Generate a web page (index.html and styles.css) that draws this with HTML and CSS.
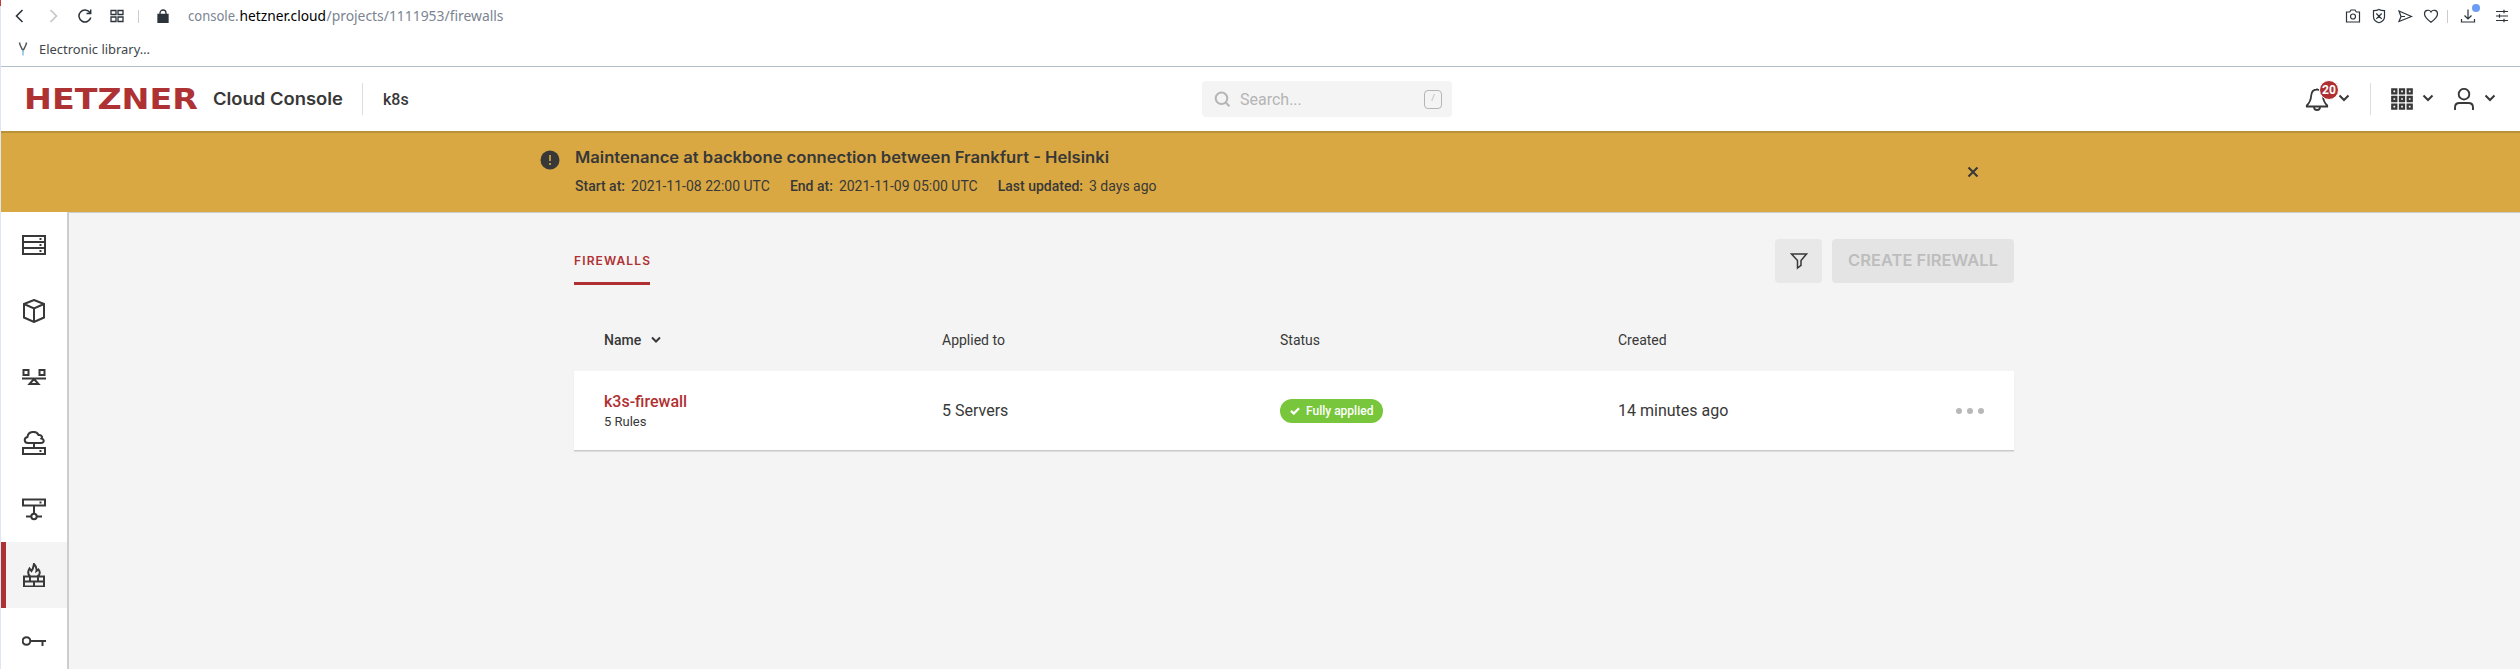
FILE: index.html
```html
<!DOCTYPE html>
<html lang="en">
<head>
<meta charset="utf-8">
<title>Firewalls - k8s</title>
<link rel="stylesheet" href="styles.css">
</head>
<body>
<div class="edge"><i class="edge-mark"></i></div>
<div class="window">
  <div class="toolbar">
    <svg class="back" width="9" height="14" viewBox="0 0 9 14"><path d="M7.500 1L1.500 7L7.500 13"/></svg>
    <svg class="forward" width="9" height="14" viewBox="0 0 9 14"><path d="M1.500 1L7.500 7L1.500 13"/></svg>
    <svg class="reload" width="14" height="14" viewBox="0 0 14 14"><path d="M12 3.700A6 6 0 1 0 12.800 8.500M12.700 .5V4.500H8.500"/></svg>
    <svg class="tabs" width="14" height="14" viewBox="0 0 14 14"><path d="M1 1.500h5v4H1zM8 1.500h5v4H8zM1 8h5v4.500H1zM8 8h5v4.500H8z"/></svg>
    <i class="sep"></i>
    <svg class="lock" width="12" height="14" viewBox="0 0 12 14"><path class="ink" d="M1 5.500h10v8H1z"/><path d="M3 6V4a3 3 0 0 1 6 0v2"/></svg>
    <div class="url">
      <svg class="fit" width="316" height="22"><text class="url-text" y="16"><tspan x="0" textLength="50.500" lengthAdjust="spacingAndGlyphs">console.</tspan><tspan class="domain" x="51.500" textLength="86.500" lengthAdjust="spacingAndGlyphs">hetzner.cloud</tspan><tspan x="138.500" textLength="177" lengthAdjust="spacingAndGlyphs">/projects/1111953/firewalls</tspan></text></svg>
    </div>
    <div class="tools">
      <svg width="16" height="16" viewBox="0 0 16 16"><path d="M1.500 4h3.200l1.300-2h4l1.300 2h3.200v10h-13z"/><circle cx="8" cy="8.500" r="2.500"/></svg>
      <svg width="16" height="16" viewBox="0 0 16 16"><path d="M8 1.500c2 1.200 4 1.200 5.500 1.200v6c0 3-2.500 5-5.500 6c-3-1-5.500-3-5.500-6v-6C4 2.700 6 2.700 8 1.500zM5.300 5.500l5.400 5.400M10.700 5.500l-5.400 5.400"/></svg>
      <svg width="16" height="16" viewBox="0 0 16 16"><path d="M2 3l12.500 5.500L2 13.500l2-5zM4 8.500h4"/></svg>
      <svg width="16" height="16" viewBox="0 0 16 16"><path d="M8 14.300C5 12 1.500 9 1.500 6A3.500 3.500 0 0 1 8 4A3.500 3.500 0 0 1 14.500 6C14.500 9 11 12 8 14.300z"/></svg>
      <i class="sep"></i>
      <span class="download"><svg width="16" height="16" viewBox="0 0 16 16"><path d="M8 1.500v9M4.500 7.500L8 11l3.500-3.500M1.500 11v3h13v-3"/></svg><i class="dot"></i></span>
      <svg width="14" height="14" viewBox="0 0 14 14"><path d="M1 2.500h12M1 7h12M1 11.500h12M9 .8v3.400M4.500 5.300v3.400M9 9.800v3.400"/></svg>
    </div>
  </div>
  <div class="bookmarks">
    <svg width="10" height="14" viewBox="0 0 10 14"><path class="fork" d="M1.500 .5C1.500 3 3 5 5 8.500C7 5 8.500 3 8.500 .5"/><path class="stem" d="M5 8v5.500"/></svg>
    <svg class="fit" width="112" height="18"><text class="bookmark-text" y="14" textLength="111" lengthAdjust="spacingAndGlyphs">Electronic library…</text></svg>
  </div>
  <header class="header">
    <svg class="fit logo" width="172" height="24"><text y="22" x="-2" textLength="174" lengthAdjust="spacingAndGlyphs">HETZNER</text></svg>
    <svg class="fit product" width="130" height="24"><text y="18" textLength="130" lengthAdjust="spacingAndGlyphs">Cloud Console</text></svg>
    <i class="rule"></i>
    <span class="project">k8s</span>
    <div class="search">
      <svg width="17" height="17" viewBox="0 0 17 17"><circle cx="7.500" cy="7.300" r="5.800"/><path d="M11.700 11.500L15.500 15.300"/></svg>
      <span>Search...</span>
      <kbd>/</kbd>
    </div>
    <div class="account">
      <span class="bell">
        <svg width="24" height="24" viewBox="0 0 24 24"><path d="M12 1.500v1M12 2.500C8 2.500 6.500 5 6.200 8.500C5.900 13 5 15.500 1.800 18.500V19.500H22.200V18.500C19 15.500 18.100 13 17.800 8.500C17.500 5 16 2.500 12 2.500zM9 20a3 3 0 0 0 6 0"/></svg>
        <b>20</b>
      </span>
      <svg class="chev" width="12" height="8" viewBox="0 0 12 8"><path d="M1.500 1.500L6 6L10.500 1.500"/></svg>
      <i class="rule"></i>
      <svg class="apps" width="22" height="22" viewBox="0 0 22 22"><path d="M1.300 1.300h4v4h-4zM9 1.300h4v4H9zM16.700 1.300h4v4h-4zM1.300 9h4v4h-4zM9 9h4v4H9zM16.700 9h4v4h-4zM1.300 16.700h4v4h-4zM9 16.700h4v4H9zM16.700 16.700h4v4h-4z"/></svg>
      <svg class="chev chev-apps" width="12" height="8" viewBox="0 0 12 8"><path d="M1.500 1.500L6 6L10.500 1.500"/></svg>
      <svg class="user" width="20" height="22" viewBox="0 0 20 22"><circle cx="10" cy="6.200" r="5.300"/><path d="M1 22v-2.500C1 16.500 3 15 5.500 15h9c2.500 0 4.500 1.500 4.500 4.500V22"/></svg>
      <svg class="chev chev-user" width="12" height="8" viewBox="0 0 12 8"><path d="M1.500 1.500L6 6L10.500 1.500"/></svg>
    </div>
  </header>
  <section class="banner">
    <svg class="alert" width="20" height="20" viewBox="0 0 20 20"><circle cx="10" cy="10" r="9.500"/><path d="M10 5v6M10 13v2"/></svg>
    <div class="notice">
      <svg class="fit notice-title" width="536" height="22"><text y="16" textLength="534" lengthAdjust="spacingAndGlyphs">Maintenance at backbone connection between Frankfurt - Helsinki</text></svg>
      <div class="facts">
        <span><b>Start at:</b>2021-11-08 22:00 UTC</span>
        <span><b>End at:</b>2021-11-09 05:00 UTC</span>
        <span><b>Last updated:</b>3 days ago</span>
      </div>
    </div>
    <svg class="close" width="12" height="12" viewBox="0 0 12 12"><path d="M1.500 1.500l9 9M10.500 1.500l-9 9"/></svg>
  </section>
  <div class="body">
    <nav class="sidebar">
      <a><svg width="24" height="24" viewBox="0 0 24 24"><path d="M1 3h22v18H1zM1 9h22M1 15h22M17.500 6h2M17.500 12h2M17.500 18h2"/></svg></a>
      <a><svg width="24" height="24" viewBox="0 0 24 24"><path d="M12 1L22 5v13.500L12 23L2 18.500V5zM2 5l10 4.500L22 5M12 9.500V23"/></svg></a>
      <a><svg width="24" height="24" viewBox="0 0 24 24"><path d="M1.500 5h5v5h-5zM17.500 5h5v5h-5zM0 13.500h24M12 14l-4.500 5h9z"/></svg></a>
      <a><svg width="24" height="24" viewBox="0 0 24 24"><path d="M6 12C2 12 1.500 7 5.500 6C6 0 14.500 -.5 16.500 4C20 3.500 20.500 6.500 19.500 7.500C23 8.500 22 12 19 12zM12 12v4M1 17h22v6H1zM17.500 20h2"/></svg></a>
      <a><svg width="24" height="24" viewBox="0 0 24 24"><path d="M1 2.500h22v6H1zM17.500 5.500h2M12 8.500v8M4 19.500h5M15 19.500h5"/><circle cx="12" cy="19.500" r="2.700"/></svg></a>
      <a class="active"><svg width="24" height="24" viewBox="0 0 24 24"><path d="M2 13.500h20v10H2zM2 18.500h20M8 13.500v5M16 13.500v5M12 18.500v5M8 13C5.500 11 6 8 7.500 5.500L9.500 8C11 6 11.500 4 12 1C14 3 15 5 14.500 8L16.500 6.500C18.500 9 18 12 15.500 13"/></svg></a>
      <a><svg width="24" height="24" viewBox="0 0 24 24"><circle cx="4.500" cy="12" r="3.800"/><path d="M8.500 12H24M20.500 12v5"/></svg></a>
    </nav>
    <main class="main">
      <div class="topline">
        <div class="tab"><svg class="fit" width="76" height="18"><text y="14" textLength="76" lengthAdjust="spacing">FIREWALLS</text></svg></div>
        <div class="buttons">
          <button class="filter"><svg width="18" height="18" viewBox="0 0 18 18"><path d="M1.500 2h15L11 8.500v4.800L7.500 16V8.500z"/></svg></button>
          <button class="create"><svg class="fit" width="150" height="20"><text y="15" textLength="150" lengthAdjust="spacingAndGlyphs">CREATE FIREWALL</text></svg></button>
        </div>
      </div>
      <div class="row head">
        <span class="sorted">Name<svg class="sort" width="12" height="8" viewBox="0 0 12 8"><path d="M2 1.500L6 5.500L10 1.500"/></svg></span>
        <span>Applied to</span><span>Status</span><span>Created</span>
      </div>
      <div class="row item">
        <div class="name"><a>k3s-firewall</a><small>5 Rules</small></div>
        <span>5 Servers</span>
        <div><span class="pill"><svg width="10" height="8" viewBox="0 0 10 8"><path d="M1 3.800L3.800 6.500L9 1.200"/></svg>Fully applied</span></div>
        <span>14 minutes ago</span>
        <svg class="more" width="30" height="6" viewBox="0 0 30 6"><circle cx="4" cy="3" r="3"/><circle cx="15" cy="3" r="3"/><circle cx="26" cy="3" r="3"/></svg>
      </div>
    </main>
  </div>
</div>
</body>
</html>
```
FILE: styles.css
```css
* { box-sizing: border-box; }
body {
  margin: 0;
  height: 669px;
  display: flex;
  overflow: hidden;
  background: #fff;
  color: #383838;
  font-family: Roboto, "Liberation Sans", sans-serif;
  font-size: 16px;
}
svg { display: block; flex: none; fill: none; stroke: currentColor; }
.fit { fill: currentColor; stroke: none; overflow: visible; }
.edge { width: 1px; background: #dfe5f1; }
.edge-mark { display: block; height: 6px; background: #c23a3a; }
.window { flex: 1; display: flex; flex-direction: column; min-width: 0; }

.toolbar { height: 32px; display: flex; align-items: center; padding: 0 11px 0 14px; color: #2b333b; stroke-width: 1.3; }
.back { stroke-width: 1.6; }
.forward { margin-left: 25px; color: #c4c6c8; stroke-width: 1.6; }
.reload { margin-left: 20px; stroke-width: 1.5; }
.tabs { margin-left: 18px; }
.toolbar .sep { width: 1px; height: 13px; background: #ccc; }
.tabs + .sep { margin-left: 14px; }
.lock { margin-left: 18px; }
.ink { fill: currentColor; }
.url { margin-left: 19px; color: #7b8492; }
.url-text, .bookmark-text { font-family: "Noto Sans", sans-serif; font-size: 14.500px; }
.domain { fill: #000; }
.tools { margin-left: auto; display: flex; align-items: center; }
.tools svg { stroke-width: 1.2; }
.tools svg + svg { margin-left: 10px; }
.tools .sep { margin-left: 8px; }
.download { position: relative; margin: 0 19px 0 12px; }
.dot { position: absolute; left: 12px; top: -4px; width: 8px; height: 8px; border-radius: 50%; background: #6b9cf6; }

.bookmarks { height: 35px; display: flex; align-items: center; gap: 11px; padding: 0 0 0 17px; border-bottom: 1px solid #b5bfc9; color: #40454b; }
.bookmark-text { font-size: 13px; }
.fork { stroke: #555; stroke-width: 1.5; }
.stem { stroke: #8bbfe0; stroke-width: 1.5; }

.header { height: 64px; display: grid; grid-template-columns: 172px 130px 1px 873px 250px 1fr; align-items: center; padding: 0 24px 0 25px; }
.logo { color: #ae3234; font: bold 28.800px "DejaVu Sans", sans-serif; }
.product { margin-left: 15px; font: 600 17px Inter, sans-serif; }
.rule { width: 1px; height: 32px; background: #ddd; }
.header > .rule { margin-left: 34px; }
.project { margin-left: 54px; font-weight: 500; }
.search { height: 36px; display: flex; align-items: center; padding: 0 10px 0 12px; border-radius: 4px; background: #f4f4f4; color: #b5b5b5; }
.search svg { stroke-width: 2; }
.search span { margin-left: 9px; }
kbd { margin-left: auto; width: 18px; height: 19px; border: 1px solid #b5b5b5; border-radius: 4px; font: 9px/15px Roboto, sans-serif; text-align: center; }
.account { display: flex; align-items: center; justify-content: flex-end; }
.bell { position: relative; stroke-width: 1.8; }
.bell b { position: absolute; left: 14px; top: -7px; width: 20px; height: 20px; border: 1px solid #fff; border-radius: 50%; background: #b03032; color: #fff; font: bold 12px/18px Roboto, sans-serif; text-align: center; }
.chev, .sort { stroke-width: 2; }
.chev { margin-left: 9px; margin-top: -2px; }
.account .rule { margin: 0 20px; }
.apps { stroke-width: 2.300; }
.chev-apps { margin-left: 9px; }
.user { margin-left: 20px; stroke-width: 1.9; }
.chev-user { margin-left: 10px; }

.banner { height: 81px; display: flex; align-items: flex-start; padding: 18px 541px 0 539px; border-top: 2px solid #b89238; background: #daa843; }
.alert { margin-top: -1px; }
.alert circle { fill: #383838; stroke: none; }
.alert path { stroke: #daa843; stroke-width: 1.600; }
.notice { margin-left: 15px; }
.notice-title { margin-top: -4px; font: 600 16px Inter, sans-serif; }
.facts { display: flex; gap: 20px; margin-top: 8px; font-size: 14px; line-height: 18px; }
.facts b { margin-right: 6px; font-weight: 500; }
.close { margin: 15px 0 0 auto; stroke-width: 2; }

.body { flex: 1; display: flex; min-height: 0; background: #f4f4f4; box-shadow: inset 0 1px #ccc; }
.sidebar { width: 68px; flex: none; border-right: 2px solid #cdcdcd; background: #fff; }
.sidebar a { height: 66px; display: flex; align-items: center; padding-left: 21px; stroke-width: 2; }
.sidebar .active { padding-left: 16px; border-left: 5px solid #ae3234; background: #f4f4f4; }
.main { width: 1440px; margin-left: 505px; }
.topline { display: flex; justify-content: space-between; padding-top: 27px; height: 91px; }
.tab { height: 46px; padding-top: 12px; border-bottom: 3px solid #b03032; color: #b03032; font: 600 12px Inter, sans-serif; }
.buttons { display: flex; gap: 10px; }
.buttons button { height: 44px; display: flex; align-items: center; justify-content: center; padding: 0; border: 0; border-radius: 4px; }
.filter { width: 47px; background: #e8e8e8; color: #383838; stroke-width: 1.5; }
.create { width: 182px; background: #e4e4e4; color: #bdbdbd; font: 600 16px Inter, sans-serif; }
.row { display: grid; grid-template-columns: 338px 338px 338px 338px 1fr; align-items: center; padding-left: 30px; }
.head { height: 68px; padding-top: 6px; font-size: 14px; }
.sorted { display: flex; align-items: center; gap: 9px; font-weight: 500; }
.item { height: 80px; background: #fff; border-bottom: 1px solid #c9c9c9; box-shadow: 0 1px 1px rgba(0,0,0,.08); }
.name { display: flex; flex-direction: column; }
.name a { color: #b03032; font-weight: 500; line-height: 22px; }
.name small { font-size: 13px; line-height: 18px; }
.pill { display: inline-flex; align-items: center; gap: 6px; height: 24px; width: 103px; padding-left: 10px; border-radius: 12px; background: #78c63c; color: #fff; font-size: 12px; font-weight: 500; vertical-align: middle; }
.pill svg { stroke-width: 2.300; }
.more { margin-left: -1px; fill: #b8b8b8; stroke: none; }
```
